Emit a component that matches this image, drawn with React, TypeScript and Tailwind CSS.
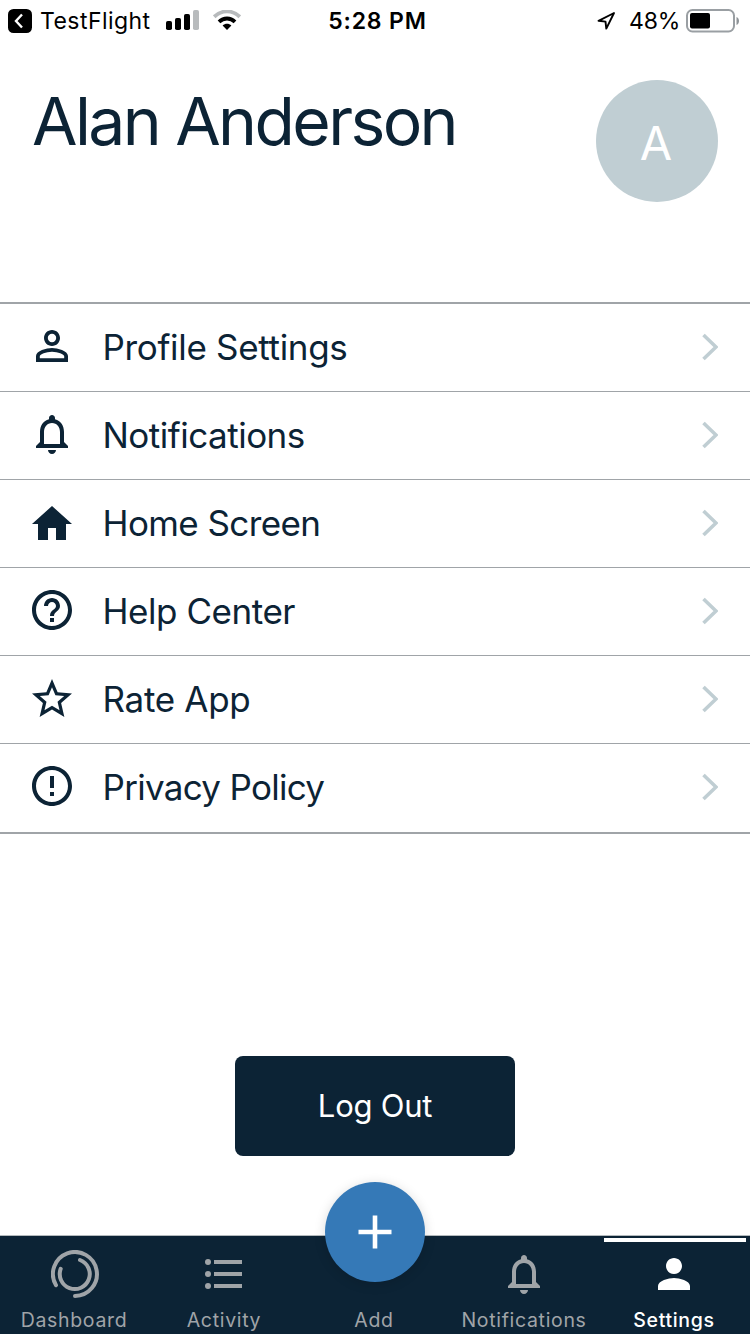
import type { ReactNode } from 'react';

import clsx from 'clsx';

interface GlyphProps {
  children: ReactNode;
  className?: string;
}

// 24-unit icon grid drawn at 48px
function Glyph({ children, className = '' }: GlyphProps) {
  return (
    <svg
      viewBox="0 0 24 24"
      className={clsx('size-12 shrink-0', className)}
      fill="currentColor"
      aria-hidden="true"
    >
      {children}
    </svg>
  );
}

const bellPath =
  'M12 22c1.1 0 2-.9 2-2h-4c0 1.1.9 2 2 2zm6-6v-5c0-3.07-1.63-5.64-4.5-6.32V4c0-.83-.67-1.5-1.5-1.5s-1.5.67-1.5 1.5v.68C7.64 5.36 6 7.92 6 11v5l-2 2v1h16v-1l-2-2zm-2 1H8v-6c0-2.48 1.51-4.5 4-4.5s4 2.02 4 4.5v6z';

const menuItems = [
  {
    label: 'Profile Settings',
    tracking: 'tracking-[-0.32px]',
    path: 'M12 5.9a2.1 2.1 0 1 1 0 4.2 2.1 2.1 0 0 1 0-4.2m0 9c2.97 0 6.1 1.46 6.1 2.1v1.1H5.9V17c0-.64 3.13-2.1 6.1-2.1M12 4C9.79 4 8 5.79 8 8s1.79 4 4 4 4-1.79 4-4-1.79-4-4-4zm0 9c-2.67 0-8 1.34-8 4v3h16v-3c0-2.66-5.33-4-8-4z',
  },
  {
    label: 'Notifications',
    tracking: 'tracking-[-0.5px]',
    path: bellPath,
  },
  {
    label: 'Home Screen',
    tracking: 'tracking-[-0.6px]',
    path: 'M10 21v-6h4v6h5v-8h3L12 4 2 13h3v8z',
  },
  {
    label: 'Help Center',
    tracking: 'tracking-[-0.45px]',
    path: 'M11 18h2v-2h-2v2zm1-16C6.48 2 2 6.48 2 12s4.48 10 10 10 10-4.48 10-10S17.52 2 12 2zm0 18c-4.41 0-8-3.59-8-8s3.59-8 8-8 8 3.59 8 8-3.59 8-8 8zm0-14c-2.21 0-4 1.79-4 4h2c0-1.1.9-2 2-2s2 .9 2 2c0 2-3 1.75-3 5h2c0-2.25 3-2.5 3-5 0-2.21-1.79-4-4-4z',
  },
  {
    label: 'Rate App',
    tracking: 'tracking-[-0.3px]',
    path: 'M22 9.74l-7.19-.62L12 2.5 9.19 9.13 2 9.74l5.46 4.73L5.82 21.5 12 17.77 18.18 21.5l-1.63-7.03L22 9.74zM12 15.9l-3.76 2.27 1-4.28-3.32-2.88 4.38-.38L12 6.6l1.71 4.04 4.38.38-3.32 2.88 1 4.28L12 15.9z',
  },
  {
    label: 'Privacy Policy',
    tracking: 'tracking-[-0.7px]',
    path: 'M11 15h2v2h-2zm0-8h2v6h-2zm.99-5C6.47 2 2 6.48 2 12s4.47 10 9.99 10C17.52 22 22 17.52 22 12S17.52 2 11.99 2zM12 20c-4.42 0-8-3.58-8-8s3.58-8 8-8 8 3.58 8 8-3.58 8-8 8z',
  },
];

function StatusBar() {
  return (
    <div className="grid h-[42px] grid-cols-3 items-center text-[23px] leading-none text-black">
      <div className="flex items-center pl-2">
        <svg width="24" height="24" viewBox="0 0 24 24" aria-hidden="true">
          <rect width="24" height="24" rx="5.5" fill="#000" />
          <path d="M14 5.5 8 12l6 6.5" fill="none" stroke="#fff" strokeWidth="2.4" />
        </svg>
        <span className="ml-2 w-[116px] tracking-[0.45px]">TestFlight</span>
        <svg width="33" height="20" viewBox="0 0 33 20" className="-mt-0.5 ml-2.5" aria-hidden="true">
          <rect y="11" width="6" height="9" rx="1.8" />
          <rect x="9" y="8" width="6" height="12" rx="1.8" />
          <rect x="18" y="4" width="6" height="16" rx="1.8" />
          <rect x="27" width="6" height="20" rx="1.8" fill="#b8bbbd" />
        </svg>
        <svg width="28" height="20" viewBox="0 0 28 20" className="-mt-0.5 ml-[14px]" fill="none" aria-hidden="true">
          <path d="M1.2 6.8C8.6-.4 19.4-.4 26.8 6.8" stroke="#b8bbbd" strokeWidth="3.8" />
          <path d="M6 11.8c4.6-4.4 11.4-4.4 16 0" stroke="#000" strokeWidth="3.8" />
          <path d="M14 20l-4.4-4.6c2.5-2.3 6.3-2.3 8.8 0z" fill="#000" />
        </svg>
      </div>
      <div className="pl-[5px] text-center font-semibold tracking-[0.8px]">5:28 PM</div>
      <div className="flex items-center justify-end pr-[11px]">
        <svg width="20" height="20" viewBox="0 0 20 20" fill="none" stroke="#000" strokeWidth="1.9" strokeLinejoin="round" aria-hidden="true">
          <path d="M18 2 2.5 9.8l7 .8.8 7z" />
        </svg>
        <span className="ml-[13px] w-[50px] tracking-[-0.2px] whitespace-nowrap">48%</span>
        <svg width="53" height="24" viewBox="0 0 53 24" className="-mt-px ml-[7px]" aria-hidden="true">
          <rect x="1" y="1" width="47" height="21.5" rx="5.5" fill="none" stroke="#9a9fa3" strokeWidth="2" />
          <rect x="4" y="4" width="20" height="15.5" rx="2" />
          <path d="M50.5 8c2 1 2.5 2.5 2.5 4s-.5 3-2.5 4z" fill="#8f9498" />
        </svg>
      </div>
    </div>
  );
}

function ProfileHeader() {
  return (
    <header className="flex h-[260px] items-start justify-between px-8 pt-[38px]">
      <h1 className="pt-px text-[66px] leading-[80px] tracking-[-2.6px]">Alan Anderson</h1>
      <div className="flex size-[122px] items-center justify-center rounded-full bg-[#c0ced3] pt-1 pr-0.5 text-[47px] text-white">
        A
      </div>
    </header>
  );
}

function SettingsMenu() {
  return (
    <ul className="border-y-2 border-[#a0a4a8]">
      {menuItems.map(item => (
        <li
          key={item.label}
          className="flex h-[88px] items-center border-b border-[#a0a4a8] pr-8 pl-7 last:border-transparent"
        >
          <Glyph className="-mt-[3px]">
            <path d={item.path} />
          </Glyph>
          <span className={clsx('ml-[26.5px] text-[35px] leading-none', item.tracking)}>
            {item.label}
          </span>
          <svg width="16" height="28" viewBox="0 0 16 28" className="-mt-0.5 ml-auto" fill="none" aria-hidden="true">
            <path d="M1.5 2 14 14 1.5 26" stroke="#c0ced3" strokeWidth="3.6" />
          </svg>
        </li>
      ))}
    </ul>
  );
}

const tabs = [
  {
    label: 'Dashboard',
    icon: (
      <svg width="48" height="48" viewBox="0 0 48 48" className="ml-0.5" fill="none" stroke="currentColor" strokeWidth="4" strokeLinecap="round" aria-hidden="true">
        <path d="M5 35.2A22 22 0 1 1 24 46" />
        <path d="M29 10A15 15 0 1 1 9.7 18.8" />
      </svg>
    ),
  },
  {
    label: 'Activity',
    icon: (
      <Glyph>
        <path d="M7 5h14v2H7zm0 6h14v2H7zm0 6h14v2H7z" />
        <circle cx="4" cy="6" r="1.5" />
        <circle cx="4" cy="12" r="1.5" />
        <circle cx="4" cy="18" r="1.5" />
      </Glyph>
    ),
  },
  { label: 'Add', icon: null },
  {
    label: 'Notifications',
    icon: (
      <Glyph>
        <path d={bellPath} />
      </Glyph>
    ),
  },
  {
    label: 'Settings',
    active: true,
    icon: (
      <Glyph>
        <path d="M12 12c2.21 0 4-1.79 4-4s-1.79-4-4-4-4 1.79-4 4 1.79 4 4 4zm0 2c-2.67 0-8 1.34-8 4v2h16v-2c0-2.66-5.33-4-8-4z" />
      </Glyph>
    ),
  },
];

function TabBar() {
  return (
    <nav className="relative h-[99px] border-t border-[#b4babd] bg-[#0c2335]">
      <div className="grid h-full grid-cols-5">
        {tabs.map(tab => (
          <div
            key={tab.label}
            className={clsx(
              'flex flex-col items-center pr-0.5',
              tab.active ? 'text-white' : 'text-[#a0a4a8]'
            )}
          >
            <div className={clsx('mt-0.5 ml-0.5 h-1 w-[142px]', tab.active && 'bg-white')} />
            <div className="mt-2 h-12">{tab.icon}</div>
            <span
              className={clsx(
                'mt-2.5 text-[19.5px] leading-6 tracking-[0.68px]',
                tab.active && 'font-medium'
              )}
            >
              {tab.label}
            </span>
          </div>
        ))}
      </div>
      {/* Floating add button, overlaps the top edge of the bar */}
      <button
        aria-label="Add"
        className="absolute -top-[54px] left-[325px] flex size-[100px] items-center justify-center rounded-full bg-[#3579b7] text-white shadow-[0_2px_12px_rgba(0,0,0,0.15)]"
      >
        <svg width="34" height="34" viewBox="0 0 34 34" stroke="currentColor" strokeWidth="4.6" aria-hidden="true">
          <path d="M17 .5v33M.5 17h33" />
        </svg>
      </button>
    </nav>
  );
}

export default function App() {
  return (
    <div className="flex h-[1334px] w-[750px] flex-col overflow-hidden bg-white font-['Inter',sans-serif] text-[#0c2335]">
      <StatusBar />
      <ProfileHeader />
      <SettingsMenu />
      <button className="mx-auto mt-[222px] h-[100px] w-[280px] rounded-lg bg-[#0c2335] text-[31px] tracking-[-0.25px] text-white">
        Log Out
      </button>
      <div className="mt-auto">
        <TabBar />
      </div>
    </div>
  );
}
